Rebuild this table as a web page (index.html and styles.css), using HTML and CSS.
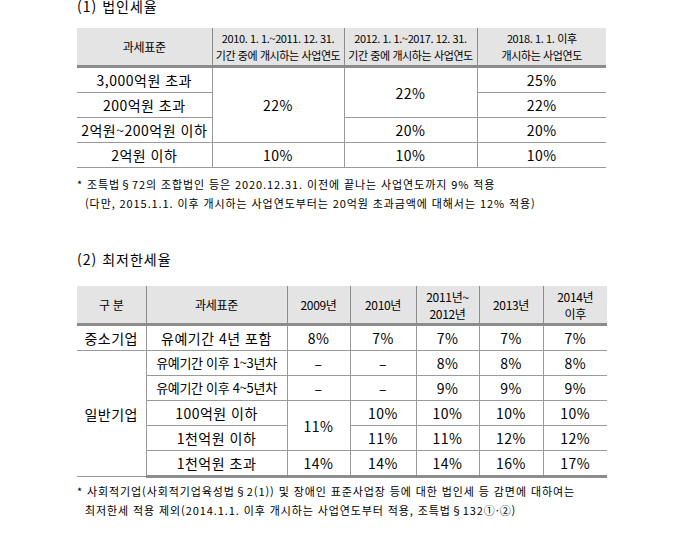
FILE: index.html
```html
<!DOCTYPE html>
<html lang="ko">
<head>
<meta charset="utf-8">
<link rel="stylesheet" href="styles.css">
</head>
<body>
<div class="page">
  <h2 class="title t1">(1) 법인세율</h2>
  <table class="tbl tbl1">
    <colgroup>
      <col style="width:135px"><col style="width:132px"><col style="width:133px"><col style="width:129px">
    </colgroup>
    <thead>
      <tr>
        <th>과세표준</th>
        <th class="sm">2010. 1. 1.~2011. 12. 31.<br>기간 중에 개시하는 사업연도</th>
        <th class="sm">2012. 1. 1.~2017. 12. 31.<br>기간 중에 개시하는 사업연도</th>
        <th class="sm">2018. 1. 1. 이후<br>개시하는 사업연도</th>
      </tr>
    </thead>
    <tbody>
      <tr><td>3,000억원 초과</td><td rowspan="3">22%</td><td rowspan="2">22%</td><td>25%</td></tr>
      <tr><td>200억원 초과</td><td>22%</td></tr>
      <tr><td>2억원~200억원 이하</td><td>20%</td><td>20%</td></tr>
      <tr><td>2억원 이하</td><td>10%</td><td>10%</td><td>10%</td></tr>
    </tbody>
  </table>
  <div class="note n1">
    <p>* 조특법§72의 조합법인 등은 2020.12.31. 이전에 끝나는 사업연도까지 9% 적용</p>
    <p class="indent">(다만, 2015.1.1. 이후 개시하는 사업연도부터는 20억원 초과금액에 대해서는 12% 적용)</p>
  </div>

  <h2 class="title t2">(2) 최저한세율</h2>
  <table class="tbl tbl2">
    <colgroup>
      <col style="width:69px"><col style="width:141px"><col style="width:63px"><col style="width:66px"><col style="width:63px"><col style="width:64px"><col style="width:64px">
    </colgroup>
    <thead>
      <tr>
        <th>구 분</th>
        <th>과세표준</th>
        <th>2009년</th>
        <th>2010년</th>
        <th>2011년~<br>2012년</th>
        <th>2013년</th>
        <th>2014년<br>이후</th>
      </tr>
    </thead>
    <tbody>
      <tr><td>중소기업</td><td>유예기간 4년 포함</td><td>8%</td><td>7%</td><td>7%</td><td>7%</td><td>7%</td></tr>
      <tr><td rowspan="5">일반기업</td><td class="sm">유예기간 이후 1~3년차</td><td>–</td><td>–</td><td>8%</td><td>8%</td><td>8%</td></tr>
      <tr><td class="sm">유예기간 이후 4~5년차</td><td>–</td><td>–</td><td>9%</td><td>9%</td><td>9%</td></tr>
      <tr><td>100억원 이하</td><td rowspan="2">11%</td><td>10%</td><td>10%</td><td>10%</td><td>10%</td></tr>
      <tr><td>1천억원 이하</td><td>11%</td><td>11%</td><td>12%</td><td>12%</td></tr>
      <tr><td>1천억원 초과</td><td>14%</td><td>14%</td><td>14%</td><td>16%</td><td>17%</td></tr>
    </tbody>
  </table>
  <div class="note n2">
    <p>* 사회적기업(사회적기업육성법§2(1)) 및 장애인 표준사업장 등에 대한 법인세 등 감면에 대하여는</p>
    <p class="indent">최저한세 적용 제외(2014.1.1. 이후 개시하는 사업연도부터 적용, 조특법§132①·②)</p>
  </div>
</div>
</body>
</html>
```
FILE: styles.css
```css
html, body {
  margin: 0;
  padding: 0;
  background: #ffffff;
}
body {
  font-family: "Noto Sans CJK KR", "Noto Sans", sans-serif;
  color: #000;
}
.page {
  padding-left: 77px;
  width: 531px;
}
.title {
  margin: 0;
  font-weight: normal;
  font-size: 14px;
  line-height: 16px;
  letter-spacing: 1px;
}
.t1 {
  margin-top: -2px;
  height: 30px;
}
.t2 {
  margin-top: 38px;
  height: 35px;
}
.tbl {
  border-collapse: collapse;
  table-layout: fixed;
}
.tbl1 { width: 529px; }
.tbl2 { width: 530px; }
.tbl th {
  background: #e4e4e4;
  font-weight: normal;
  font-size: 12px;
  line-height: 17px;
  height: 37px;
  padding: 0;
  text-align: center;
  vertical-align: middle;
  border-left: 1px solid #8c8c8c;
  border-bottom: 3px solid #8c8c8c;
  letter-spacing: -0.3px;
  white-space: nowrap;
}
.tbl th.sm {
  font-size: 11px;
  letter-spacing: -0.4px;
}
.tbl th:first-child { border-left: none; }
.tbl td {
  font-size: 14px;
  line-height: 18px;
  height: 24px;
  padding: 0;
  text-align: center;
  vertical-align: middle;
  border: 1px solid #9a9a9a;
  border-top: none;
  letter-spacing: 0.5px;
  white-space: nowrap;
}
.tbl tr td:first-child { border-left: none; }
.tbl tr td:last-child { border-right: none; }
.tbl1 tbody tr:nth-child(2) td:first-child,
.tbl1 tbody tr:nth-child(3) td:first-child { border-right: 1px solid #9a9a9a; }
.tbl2 tbody tr:last-child td { border-bottom: 3px solid #8c8c8c; }
.tbl2 td.sm { font-size: 13px; letter-spacing: -0.3px; }
.note {
  font-size: 11px;
  line-height: 19px;
  letter-spacing: 0.9px;
}
.note p { margin: 0; white-space: nowrap; }
.note .indent { padding-left: 8px; }
.n1 { margin-top: 7px; }
.n2 { margin-top: 4px; }
```
